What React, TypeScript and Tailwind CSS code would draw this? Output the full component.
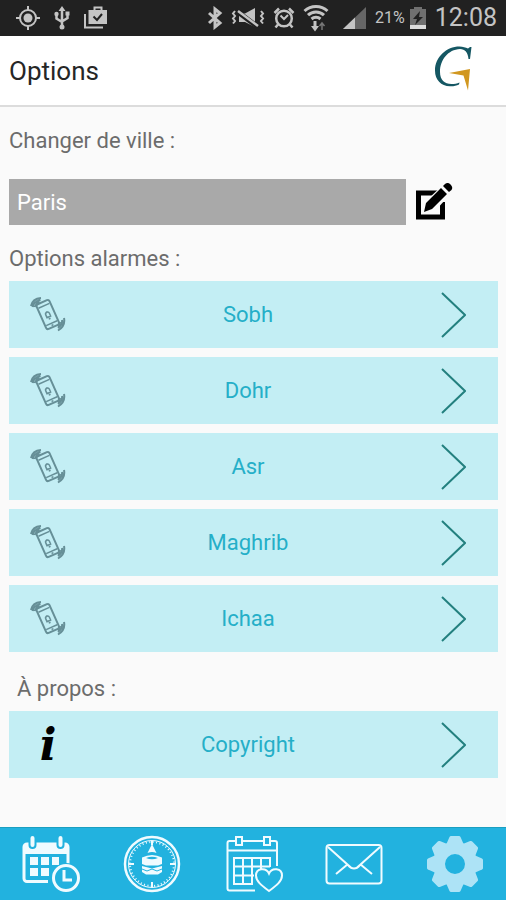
import type { ReactNode } from 'react';

const alarms = ['Sobh', 'Dohr', 'Asr', 'Maghrib', 'Ichaa'];

function StatusBar() {
  return (
    <div className="flex h-9 items-center justify-between bg-[#212121] pl-4 pr-[9px] text-[#c4c4c4]">
      <div className="flex items-center gap-[14px]">
        <svg className="h-6 w-6" viewBox="0 0 24 24" fill="none" stroke="currentColor" strokeWidth="2">
          <circle cx="12" cy="12" r="8" />
          <circle cx="12" cy="12" r="4.5" fill="currentColor" stroke="none" />
          <path d="M12 0v4M12 20v4M0 12h4M20 12h4" />
        </svg>
        <svg className="h-6 w-4" viewBox="0 0 16 24" fill="none" stroke="currentColor" strokeWidth="2.5">
          <path d="M8 3v18M2.5 9v3.5L8 16M13.5 9v3L8 15.500" />
          <path d="M8 0l3.500 5h-7zM11.500 5.500h4v4h-4z" fill="currentColor" stroke="none" />
          <circle cx="2.500" cy="8" r="2.200" fill="currentColor" stroke="none" />
          <circle cx="8" cy="21" r="2.500" fill="currentColor" stroke="none" />
        </svg>
        <svg className="h-6 w-6" viewBox="0 0 24 24" fill="none" stroke="currentColor" strokeWidth="2">
          <path d="M1 8v13.500h18" />
          <path d="M4.500 4H23v14H4.500z" fill="currentColor" stroke="none" />
          <path d="M10.500 5V1.500h7V5" />
          <path d="M9.500 10.500l3.500 3.500 5-6" stroke="#212121" />
        </svg>
      </div>

      <div className="flex items-center gap-2">
        <svg className="h-6 w-4" viewBox="0 0 16 24" fill="none" stroke="currentColor" strokeWidth="3">
          <path d="M2 7l11 10-5 4V3l5 4L2 17" />
        </svg>
        <svg className="h-6 w-[34px]" viewBox="0 0 34 24" fill="none" stroke="currentColor" strokeWidth="2">
          <path d="M4 5L2 7.500 4 10l-2 2.500L4 15l-2 2.500M30 5l2 2.500-2 2.500 2 2.500-2 2.500 2 2.500" />
          <path d="M8 7.500h6L24 2v19l-10-5H8z" fill="currentColor" stroke="none" />
          <path d="M7 6l20 15" stroke="#212121" strokeWidth="5" />
          <path d="M7 5l20 15" strokeWidth="2.500" />
        </svg>
        <svg className="h-6 w-[22px]" viewBox="0 0 22 24" fill="none" stroke="currentColor" strokeWidth="2.5">
          <circle cx="11" cy="12.500" r="7.800" />
          <path d="M7.500 9.500L11 13l4-4" strokeWidth="2" />
          <path d="M1.500 7l4.500-4.500M20.500 7L16 2.500M5 18.500l-2.500 3M17 18.500l2.500 3" />
        </svg>
        <svg className="h-7 w-[26px]" viewBox="0 0 26 28" fill="none" stroke="currentColor" strokeWidth="3">
          <path d="M1.500 7a17 17 0 0 1 23 0M5 11.200a11.500 11.500 0 0 1 16 0M8.500 15a7 7 0 0 1 9 0" />
          <path d="M10.500 17h3v5H16l-4 5.500L8 22h2.500z" fill="currentColor" stroke="none" />
          <path d="M19 26v-6M16.500 22l2.500-3 2.500 3" stroke="#777" strokeWidth="1.500" />
        </svg>
        <svg className="h-6 w-[30px]" viewBox="0 0 30 24">
          <path d="M29 1v22H6z" fill="#666" />
          <path d="M18 11.500V23H6z" fill="currentColor" />
        </svg>
        <span className="font-[Roboto] text-[16px] leading-6">21%</span>
        <svg className="-ml-1 h-6 w-[18px]" viewBox="0 0 18 24">
          <path d="M5 1h8v2h4v20H1V3h4z" fill="#707070" />
          <path d="M1 19h16v4H1z" fill="#ddd" />
          <path d="M11 5l-7 8h4l-2 6 8-8h-4z" fill="#212121" />
        </svg>
        <span className="text-[25px] leading-7">12:08</span>
      </div>
    </div>
  );
}

function Logo() {
  return (
    <svg className="h-[46px] w-10" viewBox="0 0 40 46" role="img" aria-label="Logo">
      <path
        d="M37.500 1l-1.500 12h-1.500C34 6.500 31 3 26 3 14 3.500 6 14 6 26c0 8 4.500 12 11.500 12 3 0 5.500-.5 8-1.500l-.5 2C22.500 39.500 19.500 40.500 16 40.300 7 40 1 34 1 24.500 1 11 12.500 .5 25.500.5c3.500 0 6 1 8.500 2L36 1z"
        fill="#155763"
      />
      <path d="M15 27L36 23l-2 21.500L29.500 29.500z" fill="#d1971f" />
    </svg>
  );
}

function PhoneIcon() {
  return (
    <svg className="h-9 w-9" viewBox="0 0 36 36" fill="none" stroke="#668f97" strokeWidth="1.500">
      <g transform="rotate(-24 18 18)">
        <rect x="11" y="4" width="14" height="27" rx="2" strokeWidth="2" />
        <path d="M12 8h12M12 27h12M17 29h2" />
        <path d="M16 20v-3a2 2 0 0 1 4 0v3zM17 22h2M18 14v1" />
      </g>
      <path d="M1 9C2 4 5.500 1.500 11 1M2.500 10c1-4 4-6 8-7M4.500 10c1-2.500 3-4 5-5" strokeWidth="2" />
      <path d="M34 21c1 5-1 9.500-6 12.500M32 23c.5 3-1 6-4 8M30 25c0 1.500-1 3-2.500 4" strokeWidth="2" />
    </svg>
  );
}

function InfoIcon() {
  return (
    <span aria-hidden="true" className="w-9 text-center font-['DejaVu_Serif'] text-[44px] font-bold italic text-black">
      i
    </span>
  );
}

function Row({ label, icon }: { label: string; icon: ReactNode }) {
  return (
    <button className="flex h-[67px] w-full items-center bg-[#c3eef4] pl-[21px] pr-8 text-[22px] text-[#25afc8]">
      {icon}
      <span className="flex-1">{label}</span>
      <svg className="h-12 w-9" viewBox="0 0 36 48" fill="none" stroke="#23807f" strokeWidth="2">
        <path d="M12 2l23 22-23 22" />
      </svg>
    </button>
  );
}

function NavButton({ label, children }: { label: string; children: ReactNode }) {
  return (
    <button aria-label={label} className="flex items-center justify-center">
      <svg className="size-[60px]" viewBox="0 0 60 60" fill="none" stroke="#f0fbff" strokeWidth="2">
        {children}
      </svg>
    </button>
  );
}

function BottomNav() {
  return (
    <nav className="grid h-[73px] grid-cols-5 border-t border-[#1b9fc0] bg-[#22b2df]">
      <NavButton label="Horaires">
        <path d="M27 47.500H6a3 3 0 0 1-3-3V13a3 3 0 0 1 3-3h38a3 3 0 0 1 3 3v17" strokeWidth="3" />
        <path d="M3 11h44v9H3z" fill="#f0fbff" stroke="none" />
        <path d="M11.500 4v7M39.500 4v7" stroke="#22b2df" strokeWidth="8" strokeLinecap="round" />
        <path d="M11.500 4v7M39.500 4v7" strokeWidth="4" strokeLinecap="round" />
        <path d="M9 23h8v8H9zM20 23h8v8h-8zM31 23h7v8h-7zM9 34h8v8H9zM20 34h8v8h-8z" fill="#f0fbff" stroke="none" />
        <circle cx="45" cy="44" r="15" fill="#22b2df" stroke="none" />
        <circle cx="45" cy="44" r="12.500" strokeWidth="3" />
        <path d="M43 36v10h8" strokeWidth="3" />
      </NavButton>

      <NavButton label="Boussole">
        <circle cx="30" cy="30" r="27" strokeWidth="2.5" />
        <circle cx="30" cy="30" r="23.500" strokeWidth="1" />
        <circle cx="30" cy="30" r="22" strokeWidth="2" strokeDasharray="1 2.456" />
        <path d="M30 7v4M30 48v5M7 30h5M48 30h5" />
        <path d="M30 10l4.500 9q-4.500-2-9 0z" fill="#f0fbff" stroke="none" />
        <path d="M20 23.500q10-5 20 0V30l-4 1.500H24L20 30z" fill="#f0fbff" stroke="none" />
        <path d="M24 24q6-2.500 12 0-6 2.500-12 0z" fill="#22b2df" stroke="none" />
        <path d="M20 32l10 2.500L40 32v6l-4 2.500H24L20 38z" fill="#f0fbff" stroke="none" />
        <path d="M20 35l5 2 5-2 5 2 5-2" stroke="#22b2df" strokeWidth="1" />
      </NavButton>

      <NavButton label="Calendrier">
        <path d="M32 56.500H6.500a2 2 0 0 1-2-2V9a2 2 0 0 1 2-2H13M19 7h22M47 7h5a2 2 0 0 1 2 2v23M5 16.500h49" />
        <path d="M13 3h6v8h-6zM41 3h6v8h-6z" />
        <path d="M47 33V24H11v26h19M11 32.500h36M11 41.500h20M20 24v26M29 24v26M38 24v11" />
        <path
          d="M46 57C38 51 33 47 33 41.500c0-7.500 10-8.500 13-2 3-6.500 13-5.500 13 2C59 47 54 51 46 57z"
          fill="#22b2df"
        />
      </NavButton>

      <NavButton label="Messages">
        <rect x="2.500" y="11" width="55" height="38.500" rx="3" />
        <path d="M4 13l20 18q6 7 12 0l20-18M12 40l12-10M48 40L36 30" />
      </NavButton>

      <NavButton label="Options">
        <circle cx="30" cy="30" r="16" stroke="#ade3f6" strokeWidth="12" />
        {[0, 45, 90, 135, 180, 225, 270, 315].map((angle) => (
          <path
            key={angle}
            d="M21 11l3.500-8q.5-1 1.500-1h8q1 0 1.500 1l3.500 8z"
            transform={`rotate(${angle} 30 30)`}
            fill="#ade3f6"
            stroke="none"
          />
        ))}
      </NavButton>
    </nav>
  );
}

export default function App() {
  return (
    <div className="flex min-h-screen flex-col bg-[#fafafa] font-[Roboto,sans-serif] text-[22px] leading-7 text-[#6c6c6c]">
      <StatusBar />
      <header className="flex h-[71px] items-center justify-between border-b-2 border-[#dcdcdc] bg-white pl-[9px] pr-8 pb-1">
        <h1 className="pt-1 text-[26px] leading-8 text-[#262626]">Options</h1>
        <Logo />
      </header>

      <main className="flex-1 pl-[9px] pr-2 pt-5">
        <label htmlFor="city" className="block">Changer de ville :</label>
        <div className="mt-6 flex items-center">
          <input
            id="city"
            defaultValue="Paris"
            className="h-[46px] min-w-0 flex-1 bg-[#a9a9a9] px-2 text-white outline-none"
          />
          <button aria-label="Modifier" className="ml-[9px] mr-[43px]">
            <svg className="h-10 w-10" viewBox="0 0 40 40">
              <path d="M24 11H3.500v24h24V20" fill="none" stroke="#000" strokeWidth="5" />
              <path d="M8 32l4-14L31 0l8 8-18 20z" fill="#fafafa" />
              <path d="M9 30l2-9L26 6l6 6-15 15zM28 4l2-2c2-1.500 4-1 5.500.5S38 6 36.500 8L34 10z" fill="#000" />
            </svg>
          </button>
        </div>

        <h2 className="mt-5">Options alarmes :</h2>
        <div className="mt-2 flex flex-col gap-[9px]">
          {alarms.map((name) => (
            <Row key={name} label={name} icon={<PhoneIcon />} />
          ))}
        </div>

        <h2 className="mt-[23px] pl-2">À propos :</h2>
        <div className="mt-2">
          <Row label="Copyright" icon={<InfoIcon />} />
        </div>
      </main>

      <BottomNav />
    </div>
  );
}
